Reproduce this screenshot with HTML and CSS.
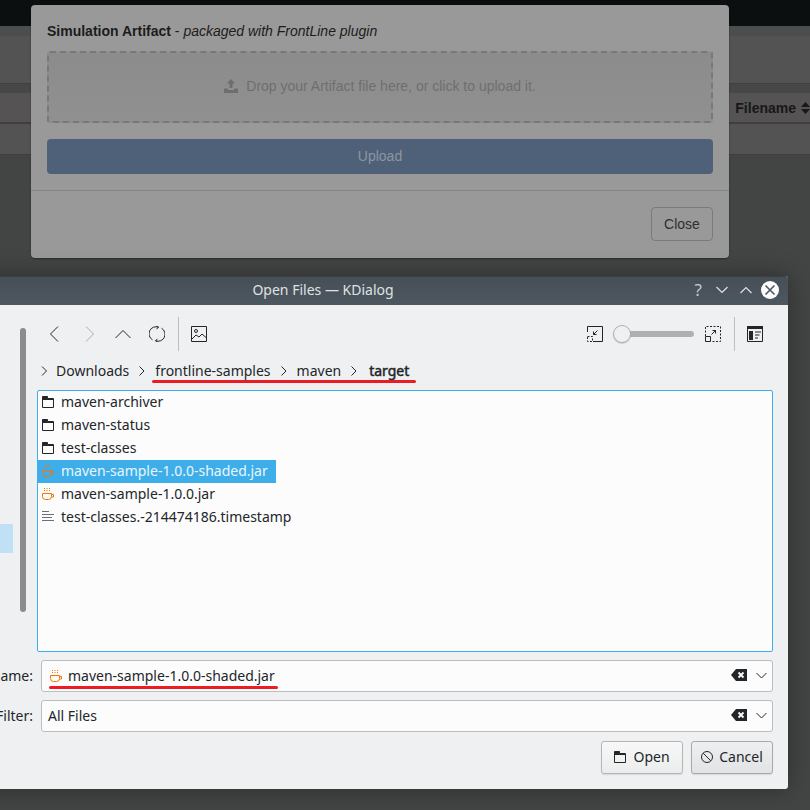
FILE: index.html
```html
<!DOCTYPE html>
<html lang="en">
<head>
    <meta charset="UTF-8">
    <title>Open Files — KDialog</title>
    <link rel="stylesheet" href="styles.css">
</head>
<body>
    <!-- Page behind the dimmed modal -->
    <div class="topbar"></div>
    <div class="strip"></div>
    <div class="card"></div>
    <div class="gap"></div>
    <div class="table-head">
        <b>Filename</b>
        <svg class="sort" width="9" height="12" viewBox="0 0 9 12"><path d="M4.500 0 9 5H0zM0 7h9l-4.500 5z"/></svg>
    </div>
    <div class="table-row"></div>

    <!-- Upload modal -->
    <div class="modal">
        <div class="modal-body">
            <div class="modal-title"><b>Simulation Artifact</b> - <i>packaged with FrontLine plugin</i></div>
            <div class="dropzone">
                <svg width="14" height="14" viewBox="0 0 14 14"><path d="M7 0l4 4.500H8.500V9h-3V4.500H3zM0 9.500h4V11h6V9.500h4V14H0z"/></svg>
                <span>Drop your Artifact file here, or click to upload it.</span>
            </div>
            <div class="upload-btn">Upload</div>
        </div>
        <div class="modal-footer">
            <div class="close-btn">Close</div>
        </div>
    </div>

    <!-- KDE file dialog -->
    <div class="kdialog">
        <div class="titlebar">
            <span class="title-text">Open Files — KDialog</span>
            <div class="win-controls">
                <span class="win-help">?</span>
                <svg width="14" height="14" viewBox="0 0 14 14"><path class="line" d="M1.500 4 7 9.500 12.500 4"/></svg>
                <svg width="14" height="14" viewBox="0 0 14 14"><path class="line" d="M1.500 10 7 4.500 12.500 10"/></svg>
                <svg width="18" height="18" viewBox="0 0 18 18"><circle cx="9" cy="9" r="9" fill="#fcfcfc"/><path d="M4.500 4.500l9 9M13.500 4.500l-9 9" fill="none" stroke="#4d5760" stroke-width="1.600"/></svg>
            </div>
        </div>

        <div class="dialog-top">
            <div class="places">
                <div class="places-scroll"></div>
                <div class="places-active"></div>
            </div>

            <div class="browser">
                <div class="toolbar">
                    <div class="tool"><svg width="16" height="16" viewBox="0 0 16 16"><path class="ico" d="M11 .5 3.500 8l7.500 7.500"/></svg></div>
                    <div class="tool"><svg width="16" height="16" viewBox="0 0 16 16"><path class="ico off" d="M5 .5 12.500 8 5 15.500"/></svg></div>
                    <div class="tool"><svg width="16" height="16" viewBox="0 0 16 16"><path class="ico" d="M.5 12 8 4.500l7.500 7.500"/></svg></div>
                    <div class="tool"><svg width="16" height="16" viewBox="0 0 16 16"><path class="ico" d="M3.500 13.800A7 7 0 0 1 9.500 1.200M12.500 2.200A7 7 0 0 1 6.500 14.800M9.500 1.200 7.500 3.200M9.500 1.200 7.500 0M6.500 14.800l2-2M6.500 14.800l2 1.200"/></svg></div>
                    <div class="tool-sep"></div>
                    <div class="tool"><svg width="16" height="16" viewBox="0 0 16 16"><path class="ico" d="M.5.500h15v15H.5zM1 13l4-4 3 2 3-3 4 3.500"/><circle class="ico" cx="5" cy="5" r="1.500"/></svg></div>
                    <div class="tool-fill"></div>
                    <div class="tool"><svg width="16" height="16" viewBox="0 0 16 16"><path class="ico" d="M.5 6V.5h15v15H6M10.500 4.500l-4 4M6.500 5.500v3h3"/><path class="ico" stroke-dasharray="2 1.500" d="M.5 10.500h5v5h-5z"/></svg></div>
                    <div class="zoom-slider"><div class="zoom-handle"></div></div>
                    <div class="tool"><svg width="16" height="16" viewBox="0 0 16 16"><path class="ico" stroke-dasharray="2 1.500" d="M.5 10V.5h15v15H6"/><path class="ico" d="M.5 10.500h5v5h-5zM6.500 8.500l4-4M7.500 4.500h3v3"/></svg></div>
                    <div class="tool-sep"></div>
                    <div class="tool"><svg width="16" height="16" viewBox="0 0 16 16"><path class="ico" d="M.5.500h15v15H.5z"/><path d="M0 0h16v3H0zM2 5h4v9H2z" fill="#232629"/><path class="ico" d="M8 6h6M8 9h4.500M8 12h3"/></svg></div>
                </div>

                <div class="crumbs">
                    <svg class="crumb-arrow" width="8" height="10" viewBox="0 0 8 10"><path class="ico" d="M1 .5 5.500 5 1 9.500"/></svg>
                    <span class="crumb">Downloads</span>
                    <svg class="crumb-arrow" width="8" height="10" viewBox="0 0 8 10"><path class="ico" d="M1.500 .5 6 5 1.500 9.500"/></svg>
                    <span class="crumb">frontline-samples</span>
                    <svg class="crumb-arrow" width="8" height="10" viewBox="0 0 8 10"><path class="ico" d="M1.500 .5 6 5 1.500 9.500"/></svg>
                    <span class="crumb">maven</span>
                    <svg class="crumb-arrow crumb-arrow-last" width="8" height="10" viewBox="0 0 8 10"><path class="ico" d="M1.500 .5 6 5 1.500 9.500"/></svg>
                    <span class="crumb crumb-current">target</span>
                    <div class="mark mark-crumbs"></div>
                </div>

                <div class="file-list">
                    <div class="file-row">
                        <svg width="14" height="14" viewBox="0 0 14 14"><path class="ico" d="M1.500 12.500v-11h5v2h6v9zM1.500 4.500h11"/><path d="M1.500 1.500h5v3h-5z" fill="#232629"/></svg>
                        <span>maven-archiver</span>
                    </div>
                    <div class="file-row">
                        <svg width="14" height="14" viewBox="0 0 14 14"><path class="ico" d="M1.500 12.500v-11h5v2h6v9zM1.500 4.500h11"/><path d="M1.500 1.500h5v3h-5z" fill="#232629"/></svg>
                        <span>maven-status</span>
                    </div>
                    <div class="file-row">
                        <svg width="14" height="14" viewBox="0 0 14 14"><path class="ico" d="M1.500 12.500v-11h5v2h6v9zM1.500 4.500h11"/><path d="M1.500 1.500h5v3h-5z" fill="#232629"/></svg>
                        <span>test-classes</span>
                    </div>
                    <div class="file-row selected">
                        <svg width="14" height="14" viewBox="0 0 14 14"><path class="cup" d="M1.500 6.500h9v3a3 3 0 0 1-3 3h-3a3 3 0 0 1-3-3zM10.500 7.500h2v2.500h-2"/><path class="steam" d="M3.500 1v4M6 1v4M8.500 1v4"/></svg>
                        <span>maven-sample-1.0.0-shaded.jar</span>
                    </div>
                    <div class="file-row">
                        <svg width="14" height="14" viewBox="0 0 14 14"><path class="cup" d="M1.500 6.500h9v3a3 3 0 0 1-3 3h-3a3 3 0 0 1-3-3zM10.500 7.500h2v2.500h-2"/><path class="steam" d="M3.500 1v4M6 1v4M8.500 1v4"/></svg>
                        <span>maven-sample-1.0.0.jar</span>
                    </div>
                    <div class="file-row">
                        <svg width="14" height="14" viewBox="0 0 14 14"><path d="M1 1.500h7M1 4.500h12M1 7.500h10M1 10.500h12" fill="none" stroke="#6a7076"/></svg>
                        <span>test-classes.-214474186.timestamp</span>
                    </div>
                </div>
            </div>
        </div>

        <div class="form-row">
            <label>Name:</label>
            <div class="field">
                <svg class="field-icon" width="14" height="14" viewBox="0 0 14 14"><path class="cup" d="M1.500 6.500h9v3a3 3 0 0 1-3 3h-3a3 3 0 0 1-3-3zM10.500 7.500h2v2.500h-2"/><path class="steam" d="M3.500 1v4M6 1v4M8.500 1v4"/></svg>
                <span class="field-text">maven-sample-1.0.0-shaded.jar</span>
                <svg width="16" height="12" viewBox="0 0 16 12"><path d="M5 0h11v12H5L0 6z" fill="#232629"/><path d="M7.500 3.500l5 5M12.500 3.500l-5 5" stroke="#fcfcfc" stroke-width="1.800"/></svg>
                <svg class="field-arrow" width="11" height="7" viewBox="0 0 11 7"><path class="ico" d="M.5 1l5 5 5-5"/></svg>
                <div class="mark mark-name"></div>
            </div>
        </div>
        <div class="form-row">
            <label>Filter:</label>
            <div class="field">
                <span class="field-text">All Files</span>
                <svg width="16" height="12" viewBox="0 0 16 12"><path d="M5 0h11v12H5L0 6z" fill="#232629"/><path d="M7.500 3.500l5 5M12.500 3.500l-5 5" stroke="#fcfcfc" stroke-width="1.800"/></svg>
                <svg class="field-arrow" width="11" height="7" viewBox="0 0 11 7"><path class="ico" d="M.5 1l5 5 5-5"/></svg>
            </div>
        </div>

        <div class="actions">
            <div class="btn btn-open">
                <svg width="12" height="12" viewBox="0 0 12 12"><path class="ico" d="M.5 11.500V.5h5v2h6v9zM.5 3.500h11"/><path d="M.5.500h5v3h-5z" fill="#232629"/></svg>
                <span>Open</span>
            </div>
            <div class="btn btn-focus">
                <svg width="12" height="12" viewBox="0 0 12 12"><circle class="ico" cx="6" cy="6" r="5.500"/><path class="ico" d="M2.200 2.200l7.600 7.600"/></svg>
                <span>Cancel</span>
            </div>
        </div>
    </div>
</body>
</html>
```

FILE: styles.css
```css
html, body {
    margin: 0;
    height: 810px;
    overflow: hidden;
}

body {
    position: relative;
    background-color: #434544;
    font-family: "Liberation Sans", Arial, sans-serif;
    font-size: 14px;
}

/* Page behind the modal */
.topbar {
    height: 26px;
    background-color: #0c0f0f;
}

.strip {
    height: 10px;
    background-color: #4b4e4c;
}

.card {
    height: 48px;
    background-color: #525352;
    border-bottom: 1px solid #3f403f;
    box-sizing: border-box;
}

.gap {
    height: 9px;
    background-color: #464746;
}

.table-head {
    height: 31px;
    background-color: #555353;
    border-bottom: 2px solid #3f3f3f;
    box-sizing: border-box;
    display: flex;
    align-items: center;
    justify-content: flex-end;
    gap: 5px;
    color: #171818;
}

.sort {
    fill: #171818;
}

.table-row {
    height: 30px;
    background-color: #535353;
    border-bottom: 1px solid #3f3f3f;
}

/* Upload modal */
.modal {
    position: absolute;
    left: 31px;
    top: 5px;
    width: 698px;
    height: 253px;
    background-color: #999999;
    border-radius: 4px;
    box-shadow: 0 1px 2px rgba(0, 0, 0, 0.4);
    color: #1c1c1c;
}

.modal-body {
    box-sizing: border-box;
    padding: 16px;
    height: 186px;
    border-bottom: 1px solid #858585;
}

.modal-title {
    line-height: 20px;
}

.dropzone {
    margin-top: 10px;
    height: 72px;
    box-sizing: border-box;
    padding-bottom: 2px;
    border: 2px dashed #787878;
    border-radius: 3px;
    background: linear-gradient(#8c8c8c, #909090);
    color: #6e6e6e;
    fill: #6e6e6e;
    display: flex;
    align-items: center;
    justify-content: center;
    gap: 8px;
}

.upload-btn {
    margin-top: 16px;
    height: 35px;
    line-height: 35px;
    background-color: #4f6178;
    border-radius: 4px;
    text-align: center;
    color: #8d96a1;
}

.modal-footer {
    display: flex;
    justify-content: flex-end;
    padding: 16px;
}

.close-btn {
    width: 62px;
    height: 34px;
    line-height: 32px;
    box-sizing: border-box;
    border: 1px solid #7b7b7b;
    border-radius: 4px;
    text-align: center;
    color: #2f2f2f;
}

/* KDE dialog */
.kdialog {
    position: absolute;
    left: -146px;
    top: 276px;
    width: 934px;
    height: 513px;
    background-color: #eff0f1;
    border-radius: 3px;
    box-shadow: 0 0 24px rgba(0, 0, 0, 0.35);
    font-family: "Noto Sans", sans-serif;
    font-size: 14px;
    color: #232629;
}

.titlebar {
    position: relative;
    height: 29px;
    background: linear-gradient(#474f56, #4d5760);
    border-radius: 3px 3px 0 0;
    border-top: 1px solid #3c4147;
    box-sizing: border-box;
    display: flex;
    align-items: center;
    justify-content: center;
    padding: 0 0 3px 4px;
    color: #dfe2e4;
}

.win-controls {
    position: absolute;
    right: 9px;
    top: 4px;
    display: flex;
    align-items: center;
    gap: 10px;
}

.win-controls svg:nth-child(2) {
    margin-left: 3px;
}

.win-controls svg:nth-child(3) {
    margin-right: -2px;
}

.win-controls .line {
    fill: none;
    stroke: #dfe2e4;
    stroke-width: 1.200;
}

.win-help {
    font-size: 17px;
    line-height: 18px;
    color: #c4c8cb;
}

.dialog-top {
    display: flex;
    height: 347px;
}

.places {
    width: 183px;
    position: relative;
}

.places-scroll {
    position: absolute;
    left: 166px;
    top: 23px;
    width: 6px;
    height: 284px;
    background-color: #8c8c8c;
    border-radius: 3px;
}

.places-active {
    position: absolute;
    left: 0;
    top: 219px;
    width: 159px;
    height: 29px;
    background-color: #bfe0f5;
}

.browser {
    width: 736px;
}

.toolbar {
    display: flex;
    align-items: center;
    height: 34px;
    margin-top: 12px;
    padding: 0 1px;
}

.tool {
    width: 34px;
    height: 34px;
    display: flex;
    align-items: center;
    justify-content: center;
}

.tool-sep {
    width: 1px;
    height: 34px;
    margin: 0 3px 0 4px;
    background-color: #bcbebf;
}

.tool-fill {
    flex: 1;
}

.ico {
    fill: none;
    stroke: #232629;
    stroke-width: 1;
}

.ico.off {
    stroke: #a8abad;
}

.zoom-slider {
    position: relative;
    width: 80px;
    height: 6px;
    margin: 0 2px;
    background-color: #b0b0b0;
    border-radius: 3px;
}

.zoom-handle {
    position: absolute;
    left: -1px;
    top: -6px;
    width: 18px;
    height: 18px;
    box-sizing: border-box;
    background-color: #eff0f1;
    border: 1px solid #b0b0b0;
    border-radius: 50%;
    box-shadow: 0 1px 1px rgba(0, 0, 0, 0.15);
}

.crumbs {
    position: relative;
    height: 39px;
    display: flex;
    align-items: center;
    padding-left: 4px;
}

.crumb-arrow {
    margin: 1px 9px 0;
}

.crumbs .crumb-arrow:first-child {
    margin: 1px 7px 0 0;
}

.crumbs .crumb-arrow-last {
    margin: 1px 11px 0 9px;
}

.crumb-current {
    -webkit-text-stroke: 0.5px #232629;
}

.mark {
    position: absolute;
    height: 3px;
    background-color: #ed1c24;
    border-radius: 2px;
}

.mark-crumbs {
    left: 115px;
    width: 264px;
    top: 29px;
}

.file-list {
    height: 262px;
    box-sizing: border-box;
    background-color: #fcfcfc;
    border: 1px solid #3daee9;
    border-radius: 2px;
}

.file-row {
    display: flex;
    align-items: center;
    gap: 6px;
    height: 23px;
    width: max-content;
    box-sizing: border-box;
    padding: 0 8px 2px 3px;
}

.file-row svg {
    margin-top: 1px;
}

.file-row.selected {
    background-color: #3daee9;
    color: #eaf6fc;
}

.cup {
    fill: none;
    stroke: #f67400;
    stroke-width: 1;
}

.steam {
    fill: none;
    stroke: #f67400;
    stroke-width: 1;
    stroke-dasharray: 1 1;
}

.form-row {
    display: flex;
    align-items: center;
    height: 32px;
    margin-top: 8px;
    padding-right: 15px;
}

.form-row label {
    width: 179px;
    text-align: right;
    margin-right: 8px;
    padding-bottom: 2px;
}

.field {
    position: relative;
    flex: 1;
    height: 32px;
    box-sizing: border-box;
    display: flex;
    align-items: center;
    padding: 0 5px 2px 6px;
    background-color: #fcfcfc;
    border: 1px solid #bcbebf;
    border-radius: 3px;
}

.field-icon {
    margin: 2px 5px 0 1px;
}

.field-text {
    flex: 1;
}

.field-arrow {
    margin: 1px 0 0 9px;
}

.mark-name {
    left: 7px;
    width: 229px;
    top: 25px;
}

.actions {
    display: flex;
    justify-content: flex-end;
    gap: 8px;
    margin-top: 9px;
    padding-right: 15px;
}

.btn {
    width: 82px;
    height: 33px;
    box-sizing: border-box;
    display: flex;
    align-items: center;
    justify-content: center;
    gap: 6px;
    padding-bottom: 2px;
    background: linear-gradient(#f8f8f8, #ebecec);
    border: 1px solid #b4b5b6;
    border-radius: 3px;
    box-shadow: 0 1px 1px rgba(0, 0, 0, 0.1);
}

.btn svg {
    margin-top: 1px;
}

.btn-open {
    gap: 7px;
}

.btn-focus {
    background: linear-gradient(#eeeff0, #e2e3e4);
    border-color: #a8a9aa;
}
```
